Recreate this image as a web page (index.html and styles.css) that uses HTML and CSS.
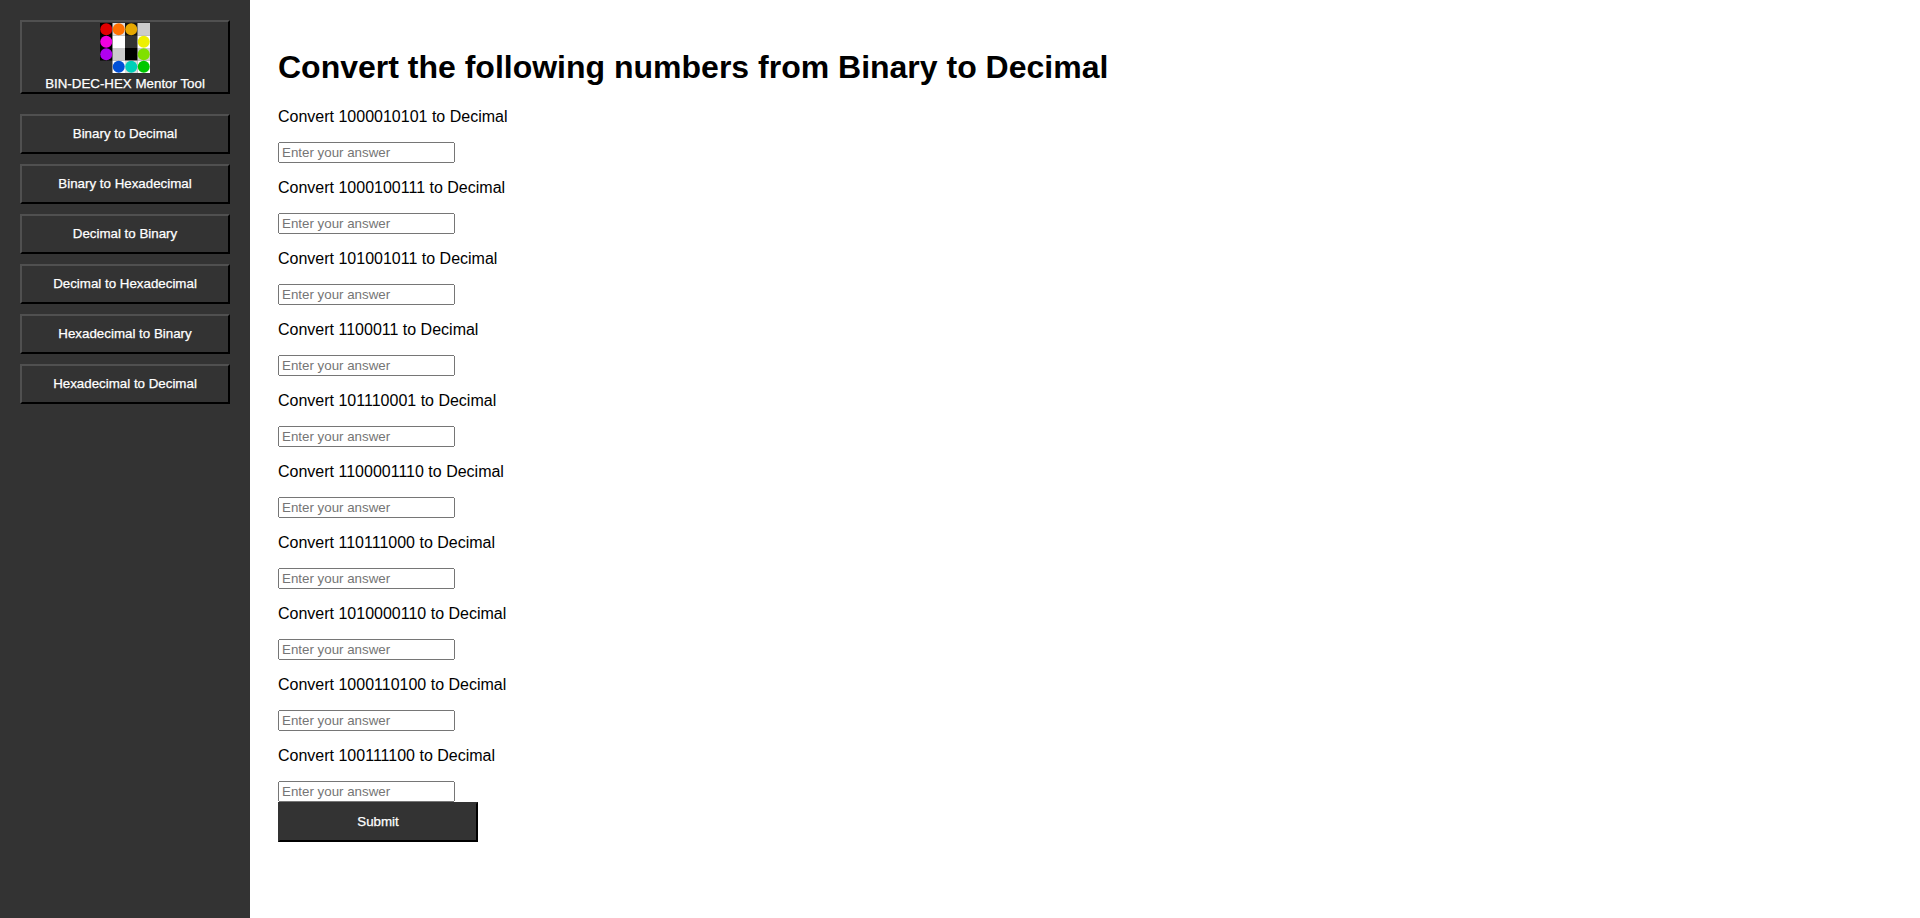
FILE: index.html
```html
<!DOCTYPE html>
<html lang="en">
<head>
<meta charset="utf-8">
<title>BIN-DEC-HEX Mentor Tool</title>
<link rel="stylesheet" href="styles.css">
</head>
<body>
<nav class="sidebar">
  <button class="nav-btn logo-btn" type="button">
    <svg class="logo" viewBox="0 0 50 50" width="50" height="50" aria-hidden="true">
      <rect x="0" y="0" width="12.5" height="37.5" fill="#000"/>
      <rect x="12.5" y="0" width="12.5" height="12.5" fill="#ddd"/>
      <rect x="25" y="0" width="12.5" height="12.5" fill="#111"/>
      <rect x="37.5" y="0" width="12.5" height="12.5" fill="#ccc"/>
      <rect x="12.5" y="12.5" width="12.5" height="12.5" fill="#fff"/>
      <rect x="37.5" y="12.5" width="12.5" height="12.5" fill="#fff"/>
      <rect x="12.5" y="25" width="12.5" height="12.5" fill="#ccc"/>
      <rect x="25" y="25" width="12.5" height="12.5" fill="#000"/>
      <rect x="37.5" y="25" width="12.5" height="12.5" fill="#ccc"/>
      <rect x="12.5" y="37.5" width="12.5" height="12.5" fill="#fff"/>
      <rect x="25" y="37.5" width="12.5" height="12.5" fill="#ddd"/>
      <rect x="37.5" y="37.5" width="12.5" height="12.5" fill="#fff"/>
      <circle cx="6.25" cy="6.25" r="6" fill="#e00000"/>
      <circle cx="18.75" cy="6.25" r="6" fill="#ff7000"/>
      <circle cx="31.25" cy="6.25" r="6" fill="#e6a800"/>
      <circle cx="6.25" cy="18.75" r="6" fill="#f000e0"/>
      <circle cx="43.75" cy="18.75" r="6" fill="#eef000"/>
      <circle cx="6.25" cy="31.25" r="6" fill="#b000f0"/>
      <circle cx="43.75" cy="31.25" r="6" fill="#80e000"/>
      <circle cx="18.75" cy="43.75" r="6" fill="#0050d8"/>
      <circle cx="31.25" cy="43.75" r="6" fill="#00d0b8"/>
      <circle cx="43.75" cy="43.75" r="6" fill="#00c800"/>
    </svg>
    <span class="logo-text">BIN-DEC-HEX Mentor Tool</span>
  </button>
  <button class="nav-btn" type="button">Binary to Decimal</button>
  <button class="nav-btn" type="button">Binary to Hexadecimal</button>
  <button class="nav-btn" type="button">Decimal to Binary</button>
  <button class="nav-btn" type="button">Decimal to Hexadecimal</button>
  <button class="nav-btn" type="button">Hexadecimal to Binary</button>
  <button class="nav-btn" type="button">Hexadecimal to Decimal</button>
</nav>
<main class="content">
  <h1 class="title">Convert the following numbers from Binary to Decimal</h1>
  <form class="quiz">
    <p class="question">Convert 1000010101 to Decimal</p>
    <input class="answer" type="text" placeholder="Enter your answer">
    <p class="question">Convert 1000100111 to Decimal</p>
    <input class="answer" type="text" placeholder="Enter your answer">
    <p class="question">Convert 101001011 to Decimal</p>
    <input class="answer" type="text" placeholder="Enter your answer">
    <p class="question">Convert 1100011 to Decimal</p>
    <input class="answer" type="text" placeholder="Enter your answer">
    <p class="question">Convert 101110001 to Decimal</p>
    <input class="answer" type="text" placeholder="Enter your answer">
    <p class="question">Convert 1100001110 to Decimal</p>
    <input class="answer" type="text" placeholder="Enter your answer">
    <p class="question">Convert 110111000 to Decimal</p>
    <input class="answer" type="text" placeholder="Enter your answer">
    <p class="question">Convert 1010000110 to Decimal</p>
    <input class="answer" type="text" placeholder="Enter your answer">
    <p class="question">Convert 1000110100 to Decimal</p>
    <input class="answer" type="text" placeholder="Enter your answer">
    <p class="question">Convert 100111100 to Decimal</p>
    <input class="answer" type="text" placeholder="Enter your answer">
    <button class="submit" type="button">Submit</button>
  </form>
</main>
</body>
</html>
```
FILE: styles.css
```css
html, body {
  height: 100%;
}
body {
  margin: 0;
  display: flex;
  font-family: "Liberation Sans", Arial, sans-serif;
  color: #000;
  background: #fff;
}
.sidebar {
  box-sizing: border-box;
  flex: 0 0 250px;
  width: 250px;
  min-height: 100%;
  padding: 20px;
  background: #333;
  display: flex;
  flex-direction: column;
  gap: 10px;
}
.nav-btn {
  box-sizing: border-box;
  width: 100%;
  height: 40px;
  padding: 0 0 2px;
  background: #333;
  color: #fff;
  border-style: solid;
  border-width: 2px;
  border-color: #505050 #000 #000 #505050;
  font: 13.333px "Liberation Sans", Arial, sans-serif;
  -webkit-text-stroke: 0.25px #fff;
}
.logo-btn {
  height: 74px;
  margin-bottom: 10px;
  display: flex;
  flex-direction: column;
  align-items: center;
  padding: 1px 0 0;
}
.logo {
  display: block;
  flex: none;
}
.logo-text {
  margin-top: 3px;
  line-height: 15px;
}
.content {
  flex: 1;
  padding: 28px 28px 0;
}
.title {
  margin: 21.44px 0;
  font-size: 32px;
  font-weight: bold;
}
.question {
  margin: 16px 0;
  font-size: 16px;
}
.answer {
  box-sizing: border-box;
  width: 177px;
  font: 13.333px "Liberation Sans", Arial, sans-serif;
}
.submit {
  display: block;
  box-sizing: border-box;
  width: 200px;
  height: 40px;
  padding: 0;
  background: #333;
  color: #fff;
  border-style: solid;
  border-width: 2px;
  border-color: #333 #000 #000 #333;
  font: 13.333px "Liberation Sans", Arial, sans-serif;
  -webkit-text-stroke: 0.25px #fff;
}
```
